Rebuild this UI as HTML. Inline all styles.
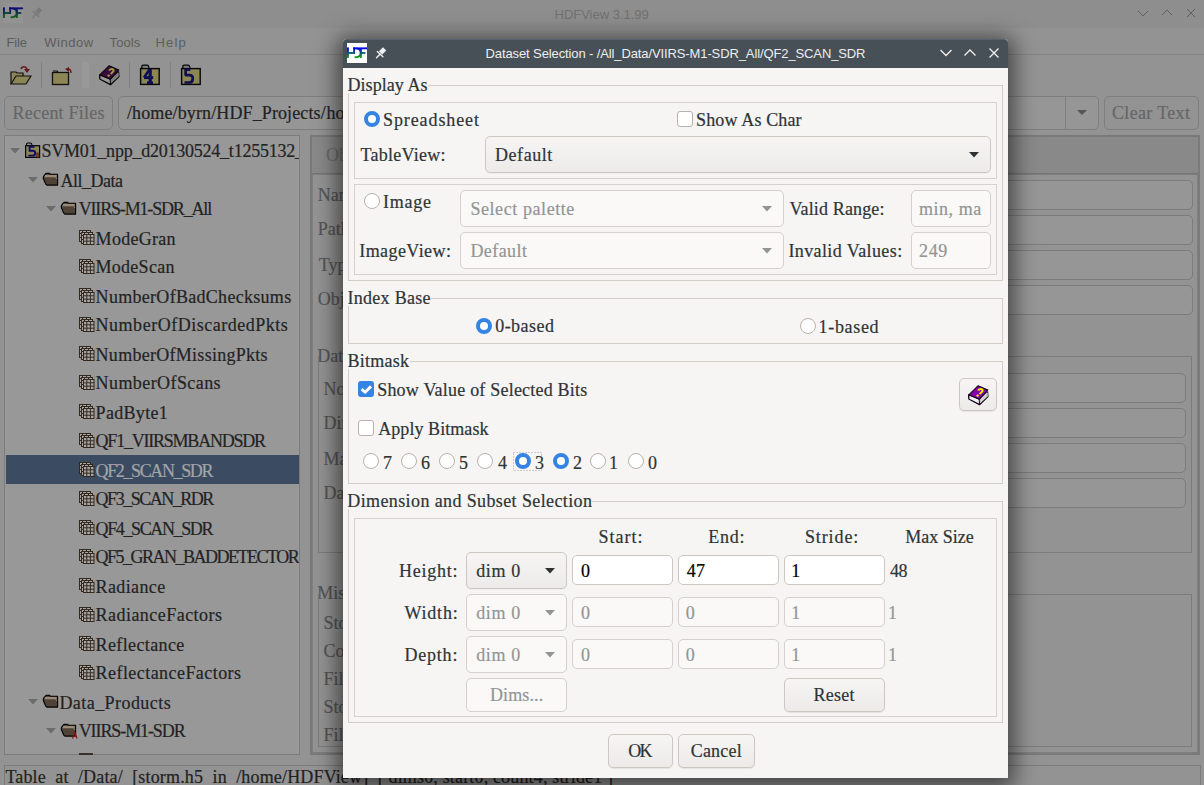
<!DOCTYPE html>
<html><head><meta charset="utf-8"><title>HDFView</title>
<style>
html,body{margin:0;padding:0;width:1204px;height:785px;overflow:hidden;background:#939393;position:relative}
body>div,body>svg{position:absolute;box-sizing:border-box}
.t{white-space:pre;position:absolute}
.s{-webkit-text-stroke:0.2px currentColor}
svg{position:absolute}
</style></head><body>
<div style="left:0px;top:0px;width:1204px;height:28px;background:#8e8e8e"></div>
<div style="left:0px;top:28px;width:1204px;height:27px;background:#939393"></div>
<div style="left:0px;top:54px;width:1204px;height:1px;background:#848484"></div>
<svg style="left:3px;top:3px" width="20" height="20" viewBox="0 0 20 20"><defs><linearGradient id="gm" x1="0" y1="4" x2="0" y2="15.5" gradientUnits="userSpaceOnUse"><stop offset="0.1" stop-color="#0c0c70"/><stop offset="0.9" stop-color="#156015"/></linearGradient></defs><rect width="20" height="20" fill="#939393"/>
<g fill="url(#gm)"><rect x="0" y="4.4" width="1.9" height="10.6"/><rect x="6.2" y="4.4" width="13.8" height="1.9"/><rect x="0" y="9.1" width="8" height="1.8"/><rect x="6.2" y="4.4" width="1.9" height="6.5"/><rect x="12.9" y="5" width="1.9" height="10"/><rect x="12.9" y="9.1" width="5.5" height="1.8"/></g>
<path d="M9 5.4C12.5 5.6 13.8 8 13.8 10C13.8 12.8 11.5 14.3 7.6 14.3" stroke="url(#gm)" stroke-width="1.9" fill="none"/></svg>
<svg style="left:28px;top:3px" width="20" height="20" viewBox="0 0 20 20"><g stroke="#7a7a7a" stroke-linecap="round"><path d="M8.6 9.9L12.6 5.9" stroke-width="4.6" stroke-linecap="butt"/><path d="M5.3 8.4L10.9 13.8" stroke-width="1.4"/><path d="M4.5 14.8L8.2 11.1" stroke-width="1.4"/></g></svg>
<div class="t" style="left:554.50px;top:7.00px;font-family:'Liberation Sans', sans-serif;font-size:13px;line-height:16px;color:#717171;letter-spacing:-0.008px;">HDFView 3.1.99</div>
<svg style="left:1130px;top:4px" width="74" height="20" viewBox="0 0 74 20"><g stroke="#606060" stroke-width="1" fill="none"><path d="M8 7l5 5 5-5"/><path d="M32 11l5-5 5 5"/><path d="M57 5l8 8M65 5l-8 8"/></g></svg>
<div class="t" style="left:6.60px;top:35.00px;font-family:'Liberation Sans', sans-serif;font-size:13px;line-height:16px;color:#5d5d5d;letter-spacing:-0.200px;">File</div>
<div class="t" style="left:44.30px;top:35.00px;font-family:'Liberation Sans', sans-serif;font-size:13px;line-height:16px;color:#5d5d5d;letter-spacing:0.540px;">Window</div>
<div class="t" style="left:109.50px;top:35.00px;font-family:'Liberation Sans', sans-serif;font-size:13px;line-height:16px;color:#5d5d5d;letter-spacing:0.125px;">Tools</div>
<div class="t" style="left:155.50px;top:35.00px;font-family:'Liberation Sans', sans-serif;font-size:13px;line-height:16px;color:#5d5d5d;letter-spacing:1.167px;">Help</div>
<div style="left:41px;top:62px;width:1px;height:26px;background:#808080"></div>
<div style="left:82px;top:62px;width:7px;height:26px;background:#989898"></div>
<div style="left:129px;top:62px;width:1px;height:26px;background:#808080"></div>
<div style="left:170px;top:62px;width:1px;height:26px;background:#808080"></div>
<svg style="left:10px;top:65px" width="22" height="20" viewBox="0 0 22 20">
<path d="M1 19V7h5l1 1h6v3" fill="#8c8656" stroke="#111" stroke-width="1.2"/>
<path d="M1 19l5-8h15l-5 8z" fill="#8c8656" stroke="#111" stroke-width="1.2"/>
<path d="M11 4c1-3 5-3 6 0" stroke="#6a1818" stroke-width="1.6" fill="none"/><path d="M14 4h6l-3 4z" fill="#6a1818"/></svg>
<svg style="left:51px;top:66px" width="22" height="20" viewBox="0 0 22 20">
<path d="M2 5h4l1 1" fill="#888" stroke="#111" stroke-width="1.2"/>
<rect x="1.5" y="6.5" width="16" height="12" fill="#8c8656" stroke="#111" stroke-width="1.3"/>
<path d="M20 7c0-2-1-4-3-4" stroke="#6a1818" stroke-width="1.5" fill="none"/><path d="M14 3l4-2v5z" fill="#6a1818"/></svg>
<svg style="left:99px;top:65px" width="22" height="22" viewBox="0 0 22 22">
<path d="M0.5 9.5L0.8 14L11.5 19.8L20 11.5L19.6 6.5" fill="#3a0c3e" stroke="#000" stroke-width="1.1" stroke-linejoin="round"/>
<path d="M1.5 10L11.3 14.8L19.3 7.5L19.6 11.2L11.5 18.7L1.5 13.8z" fill="#9a9a9a"/>
<path d="M11.3 14.8L19.3 7.5L19.6 11.2L11.5 18.7z" fill="#7e7e7e"/>
<path d="M0.8 10L10 0.8L19.8 5L11.2 14.3z" fill="#3a0c3e" stroke="#000" stroke-width="1.1" stroke-linejoin="round"/>
<path d="M11.2 14.3L11.5 19.5" stroke="#000" stroke-width="1"/>
<path d="M1.5 9l8-8" stroke="#5a3a5a" stroke-width="0.8" stroke-dasharray="0.8 0.8"/>
<path d="M10.3 5.6C10.6 3.6 14.8 3.4 14.6 5.6C14.4 7.2 12.4 7.2 12 9.2" stroke="#9c9a44" stroke-width="2" fill="none"/>
<circle cx="9.6" cy="10.6" r="1.2" fill="#9c9a44"/>
</svg>
<svg style="left:136px;top:60px" width="28" height="28" viewBox="0 0 28 28">
<path d="M5.8 8.5V6.5C5.8 5.6 6.4 5.2 7.3 5.2H11C11.8 5.2 12.6 5.8 12.8 7L13 8.5" fill="#7d7d7d" stroke="#050505" stroke-width="1.3"/>
<rect x="4.6" y="8.6" width="18.6" height="15.8" fill="#8c8655" stroke="#050505" stroke-width="1.4"/>
<path d="M14.2 8.5V24" stroke="#0e0e52" stroke-width="3.2"/><path d="M8 17.6L13.5 9.5" stroke="#0e0e52" stroke-width="2.6"/><path d="M8 17.6H17.2" stroke="#0e0e52" stroke-width="3"/><path d="M11 22.7H17" stroke="#0e0e52" stroke-width="2.6"/></svg>
<svg style="left:177px;top:60px" width="28" height="28" viewBox="0 0 28 28">
<path d="M5.8 8.5V6.5C5.8 5.6 6.4 5.2 7.3 5.2H11C11.8 5.2 12.6 5.8 12.8 7L13 8.5" fill="#7d7d7d" stroke="#050505" stroke-width="1.3"/>
<rect x="4.6" y="8.6" width="18.6" height="15.8" fill="#8c8655" stroke="#050505" stroke-width="1.4"/>
<path d="M13.3 9.6H8.6V15.2H12.6C15 15.2 15.8 16.6 15.8 18.6C15.8 21 14.6 22.5 12.3 22.5H7.5" stroke="#0e0e52" stroke-width="2.7" fill="none" stroke-linejoin="bevel"/></svg>
<div style="left:4px;top:96px;width:109px;height:34px;border:1px solid #7e7e7e;border-radius:5px;background:#939393"></div>
<div class="t s" style="left:12.50px;top:102.00px;font-family:'Liberation Serif', serif;font-size:18px;line-height:22px;color:#666666;letter-spacing:0.227px;">Recent Files</div>
<div style="left:118px;top:96px;width:981px;height:34px;border:1px solid #7e7e7e;border-radius:5px;background:#969696"></div>
<div style="left:1065px;top:97px;width:1px;height:32px;background:#7e7e7e"></div>
<svg style="left:1076px;top:109px" width="12" height="8" viewBox="0 0 12 8"><path d="M1 1h10l-5 5z" fill="#555"/></svg>
<div class="t s" style="left:127.00px;top:102.00px;font-family:'Liberation Serif', serif;font-size:18px;line-height:22px;color:#222222;letter-spacing:0.117px;">/home/byrn/HDF_Projects/</div>
<div class="t s" style="left:326.50px;top:102.00px;font-family:'Liberation Serif', serif;font-size:18px;line-height:22px;color:#222222;">home</div>
<div style="left:1104px;top:96px;width:95px;height:34px;border:1px solid #7e7e7e;border-radius:5px;background:#939393"></div>
<div class="t s" style="left:1112.00px;top:102.00px;font-family:'Liberation Serif', serif;font-size:18px;line-height:22px;color:#666666;letter-spacing:0.333px;">Clear Text</div>
<div style="left:4px;top:135px;width:296px;height:620px;border:1px solid #7c7c7c;background:#989898"></div>
<div style="left:6px;top:455px;width:293px;height:29px;background:#3b4c62"></div>
<div style="left:6px;top:136px;width:293px;height:618px;overflow:hidden">
<svg style="left:4px;top:12px" width="10" height="6" viewBox="0 0 10 6"><path d="M0 0h10l-5 5.5z" fill="#6c6c6c"/></svg>
<svg style="left:15.899999999999999px;top:3.8000000000000114px" width="22" height="22" viewBox="0 0 22 22"><path d="M4.5 5.5V4.2C4.5 3.4 5 3 5.8 3H8.5C9.3 3 9.8 3.5 9.8 4.2V5.5" fill="#8a8a8a" stroke="#050505" stroke-width="1.1"/><rect x="3.6" y="5.7" width="14" height="11.7" fill="#8c8655" stroke="#050505" stroke-width="1.2"/><path d="M12.5 6.8H7.6V10.8H10.8C12.6 10.8 13.2 12 13.2 13.2C13.2 14.8 12.3 15.6 10.8 15.6H6.3" stroke="#0e0e60" stroke-width="1.9" fill="none"/><path d="M14.6 13H16.3C17 13 17 14.9 16.3 14.9H14.9M14.9 12.8V17.3H16.4C17.2 17.3 17.2 15 16.4 15" stroke="#6a1212" stroke-width="0.9" fill="none"/></svg>
<div class="t s" style="left:35.50px;top:4.00px;font-family:'Liberation Serif', serif;font-size:18px;line-height:22px;color:#232323;letter-spacing:-0.232px;">SVM01_npp_d20130524_t1255132_</div>
<svg style="left:22px;top:41px" width="10" height="6" viewBox="0 0 10 6"><path d="M0 0h10l-5 5.5z" fill="#6c6c6c"/></svg>
<svg style="left:34.0px;top:32px" width="22" height="22" viewBox="0 0 22 22"><path d="M6 5.4H9.6L10.4 6.2H17.6V17.1H6.8L5.8 16.2L3.2 10.2C3.1 9 3.6 8 4.6 7Z" fill="#4f4236" stroke="#000" stroke-width="1.1" stroke-linejoin="round"/><path d="M5.2 6.9H16.7V9.2H4.4Z" fill="#9a8b79"/><path d="M15.6 9.2L17 11" stroke="#9a8b79" stroke-width="1"/></svg>
<div class="t s" style="left:54.40px;top:34.00px;font-family:'Liberation Serif', serif;font-size:18px;line-height:22px;color:#232323;letter-spacing:-0.471px;">All_Data</div>
<svg style="left:40px;top:70px" width="10" height="6" viewBox="0 0 10 6"><path d="M0 0h10l-5 5.5z" fill="#6c6c6c"/></svg>
<svg style="left:52.300000000000004px;top:61px" width="22" height="22" viewBox="0 0 22 22"><path d="M6 5.4H9.6L10.4 6.2H17.6V17.1H6.8L5.8 16.2L3.2 10.2C3.1 9 3.6 8 4.6 7Z" fill="#4f4236" stroke="#000" stroke-width="1.1" stroke-linejoin="round"/><path d="M5.2 6.9H16.7V9.2H4.4Z" fill="#9a8b79"/><path d="M15.6 9.2L17 11" stroke="#9a8b79" stroke-width="1"/></svg>
<div class="t s" style="left:72.70px;top:62.00px;font-family:'Liberation Serif', serif;font-size:18px;line-height:22px;color:#232323;letter-spacing:-1.167px;">VIIRS-M1-SDR_All</div>
<svg style="left:70.0px;top:90px" width="22" height="22" viewBox="0 0 22 22"><g stroke="#35291d" stroke-width="1" fill="#a6a6a6">
<rect x="3.5" y="4.5" width="11" height="11"/><path d="M3.5 7.5h11M3.5 11.5h11M6.5 4.5v11M10.5 4.5v11" fill="none"/>
<rect x="5.5" y="6.5" width="11" height="11"/><path d="M5.5 9.5h11M5.5 13.5h11M8.5 6.5v11M12.5 6.5v11" fill="none"/>
<rect x="7.5" y="8.5" width="10.5" height="10"/><path d="M7.5 11.8h10.5M7.5 15.2h10.5M10.8 8.5v10M14.4 8.5v10" fill="none"/></g></svg>
<div class="t s" style="left:89.60px;top:92.00px;font-family:'Liberation Serif', serif;font-size:18px;line-height:22px;color:#232323;letter-spacing:0.286px;">ModeGran</div>
<svg style="left:70.0px;top:119px" width="22" height="22" viewBox="0 0 22 22"><g stroke="#35291d" stroke-width="1" fill="#a6a6a6">
<rect x="3.5" y="4.5" width="11" height="11"/><path d="M3.5 7.5h11M3.5 11.5h11M6.5 4.5v11M10.5 4.5v11" fill="none"/>
<rect x="5.5" y="6.5" width="11" height="11"/><path d="M5.5 9.5h11M5.5 13.5h11M8.5 6.5v11M12.5 6.5v11" fill="none"/>
<rect x="7.5" y="8.5" width="10.5" height="10"/><path d="M7.5 11.8h10.5M7.5 15.2h10.5M10.8 8.5v10M14.4 8.5v10" fill="none"/></g></svg>
<div class="t s" style="left:89.60px;top:120.00px;font-family:'Liberation Serif', serif;font-size:18px;line-height:22px;color:#232323;letter-spacing:0.257px;">ModeScan</div>
<svg style="left:70.0px;top:148px" width="22" height="22" viewBox="0 0 22 22"><g stroke="#35291d" stroke-width="1" fill="#a6a6a6">
<rect x="3.5" y="4.5" width="11" height="11"/><path d="M3.5 7.5h11M3.5 11.5h11M6.5 4.5v11M10.5 4.5v11" fill="none"/>
<rect x="5.5" y="6.5" width="11" height="11"/><path d="M5.5 9.5h11M5.5 13.5h11M8.5 6.5v11M12.5 6.5v11" fill="none"/>
<rect x="7.5" y="8.5" width="10.5" height="10"/><path d="M7.5 11.8h10.5M7.5 15.2h10.5M10.8 8.5v10M14.4 8.5v10" fill="none"/></g></svg>
<div class="t s" style="left:89.60px;top:150.00px;font-family:'Liberation Serif', serif;font-size:18px;line-height:22px;color:#232323;letter-spacing:0.295px;">NumberOfBadChecksums</div>
<svg style="left:70.0px;top:177px" width="22" height="22" viewBox="0 0 22 22"><g stroke="#35291d" stroke-width="1" fill="#a6a6a6">
<rect x="3.5" y="4.5" width="11" height="11"/><path d="M3.5 7.5h11M3.5 11.5h11M6.5 4.5v11M10.5 4.5v11" fill="none"/>
<rect x="5.5" y="6.5" width="11" height="11"/><path d="M5.5 9.5h11M5.5 13.5h11M8.5 6.5v11M12.5 6.5v11" fill="none"/>
<rect x="7.5" y="8.5" width="10.5" height="10"/><path d="M7.5 11.8h10.5M7.5 15.2h10.5M10.8 8.5v10M14.4 8.5v10" fill="none"/></g></svg>
<div class="t s" style="left:89.60px;top:178.00px;font-family:'Liberation Serif', serif;font-size:18px;line-height:22px;color:#232323;letter-spacing:0.510px;">NumberOfDiscardedPkts</div>
<svg style="left:70.0px;top:206px" width="22" height="22" viewBox="0 0 22 22"><g stroke="#35291d" stroke-width="1" fill="#a6a6a6">
<rect x="3.5" y="4.5" width="11" height="11"/><path d="M3.5 7.5h11M3.5 11.5h11M6.5 4.5v11M10.5 4.5v11" fill="none"/>
<rect x="5.5" y="6.5" width="11" height="11"/><path d="M5.5 9.5h11M5.5 13.5h11M8.5 6.5v11M12.5 6.5v11" fill="none"/>
<rect x="7.5" y="8.5" width="10.5" height="10"/><path d="M7.5 11.8h10.5M7.5 15.2h10.5M10.8 8.5v10M14.4 8.5v10" fill="none"/></g></svg>
<div class="t s" style="left:89.60px;top:208.00px;font-family:'Liberation Serif', serif;font-size:18px;line-height:22px;color:#232323;letter-spacing:0.278px;">NumberOfMissingPkts</div>
<svg style="left:70.0px;top:235px" width="22" height="22" viewBox="0 0 22 22"><g stroke="#35291d" stroke-width="1" fill="#a6a6a6">
<rect x="3.5" y="4.5" width="11" height="11"/><path d="M3.5 7.5h11M3.5 11.5h11M6.5 4.5v11M10.5 4.5v11" fill="none"/>
<rect x="5.5" y="6.5" width="11" height="11"/><path d="M5.5 9.5h11M5.5 13.5h11M8.5 6.5v11M12.5 6.5v11" fill="none"/>
<rect x="7.5" y="8.5" width="10.5" height="10"/><path d="M7.5 11.8h10.5M7.5 15.2h10.5M10.8 8.5v10M14.4 8.5v10" fill="none"/></g></svg>
<div class="t s" style="left:89.60px;top:236.00px;font-family:'Liberation Serif', serif;font-size:18px;line-height:22px;color:#232323;letter-spacing:0.417px;">NumberOfScans</div>
<svg style="left:70.0px;top:264px" width="22" height="22" viewBox="0 0 22 22"><g stroke="#35291d" stroke-width="1" fill="#a6a6a6">
<rect x="3.5" y="4.5" width="11" height="11"/><path d="M3.5 7.5h11M3.5 11.5h11M6.5 4.5v11M10.5 4.5v11" fill="none"/>
<rect x="5.5" y="6.5" width="11" height="11"/><path d="M5.5 9.5h11M5.5 13.5h11M8.5 6.5v11M12.5 6.5v11" fill="none"/>
<rect x="7.5" y="8.5" width="10.5" height="10"/><path d="M7.5 11.8h10.5M7.5 15.2h10.5M10.8 8.5v10M14.4 8.5v10" fill="none"/></g></svg>
<div class="t s" style="left:89.60px;top:266.00px;font-family:'Liberation Serif', serif;font-size:18px;line-height:22px;color:#232323;letter-spacing:0.314px;">PadByte1</div>
<svg style="left:70.0px;top:293px" width="22" height="22" viewBox="0 0 22 22"><g stroke="#35291d" stroke-width="1" fill="#a6a6a6">
<rect x="3.5" y="4.5" width="11" height="11"/><path d="M3.5 7.5h11M3.5 11.5h11M6.5 4.5v11M10.5 4.5v11" fill="none"/>
<rect x="5.5" y="6.5" width="11" height="11"/><path d="M5.5 9.5h11M5.5 13.5h11M8.5 6.5v11M12.5 6.5v11" fill="none"/>
<rect x="7.5" y="8.5" width="10.5" height="10"/><path d="M7.5 11.8h10.5M7.5 15.2h10.5M10.8 8.5v10M14.4 8.5v10" fill="none"/></g></svg>
<div class="t s" style="left:89.60px;top:294.00px;font-family:'Liberation Serif', serif;font-size:18px;line-height:22px;color:#232323;letter-spacing:-1.225px;">QF1_VIIRSMBANDSDR</div>
<svg style="left:70.0px;top:322px" width="22" height="22" viewBox="0 0 22 22"><g stroke="#35291d" stroke-width="1" fill="#a6a6a6">
<rect x="3.5" y="4.5" width="11" height="11"/><path d="M3.5 7.5h11M3.5 11.5h11M6.5 4.5v11M10.5 4.5v11" fill="none"/>
<rect x="5.5" y="6.5" width="11" height="11"/><path d="M5.5 9.5h11M5.5 13.5h11M8.5 6.5v11M12.5 6.5v11" fill="none"/>
<rect x="7.5" y="8.5" width="10.5" height="10"/><path d="M7.5 11.8h10.5M7.5 15.2h10.5M10.8 8.5v10M14.4 8.5v10" fill="none"/></g></svg>
<div class="t s" style="left:89.60px;top:324.00px;font-family:'Liberation Serif', serif;font-size:18px;line-height:22px;color:#a2a5a8;letter-spacing:-1.382px;">QF2_SCAN_SDR</div>
<svg style="left:70.0px;top:351px" width="22" height="22" viewBox="0 0 22 22"><g stroke="#35291d" stroke-width="1" fill="#a6a6a6">
<rect x="3.5" y="4.5" width="11" height="11"/><path d="M3.5 7.5h11M3.5 11.5h11M6.5 4.5v11M10.5 4.5v11" fill="none"/>
<rect x="5.5" y="6.5" width="11" height="11"/><path d="M5.5 9.5h11M5.5 13.5h11M8.5 6.5v11M12.5 6.5v11" fill="none"/>
<rect x="7.5" y="8.5" width="10.5" height="10"/><path d="M7.5 11.8h10.5M7.5 15.2h10.5M10.8 8.5v10M14.4 8.5v10" fill="none"/></g></svg>
<div class="t s" style="left:89.60px;top:352.00px;font-family:'Liberation Serif', serif;font-size:18px;line-height:22px;color:#232323;letter-spacing:-1.482px;">QF3_SCAN_RDR</div>
<svg style="left:70.0px;top:380px" width="22" height="22" viewBox="0 0 22 22"><g stroke="#35291d" stroke-width="1" fill="#a6a6a6">
<rect x="3.5" y="4.5" width="11" height="11"/><path d="M3.5 7.5h11M3.5 11.5h11M6.5 4.5v11M10.5 4.5v11" fill="none"/>
<rect x="5.5" y="6.5" width="11" height="11"/><path d="M5.5 9.5h11M5.5 13.5h11M8.5 6.5v11M12.5 6.5v11" fill="none"/>
<rect x="7.5" y="8.5" width="10.5" height="10"/><path d="M7.5 11.8h10.5M7.5 15.2h10.5M10.8 8.5v10M14.4 8.5v10" fill="none"/></g></svg>
<div class="t s" style="left:89.60px;top:382.00px;font-family:'Liberation Serif', serif;font-size:18px;line-height:22px;color:#232323;letter-spacing:-1.382px;">QF4_SCAN_SDR</div>
<svg style="left:70.0px;top:409px" width="22" height="22" viewBox="0 0 22 22"><g stroke="#35291d" stroke-width="1" fill="#a6a6a6">
<rect x="3.5" y="4.5" width="11" height="11"/><path d="M3.5 7.5h11M3.5 11.5h11M6.5 4.5v11M10.5 4.5v11" fill="none"/>
<rect x="5.5" y="6.5" width="11" height="11"/><path d="M5.5 9.5h11M5.5 13.5h11M8.5 6.5v11M12.5 6.5v11" fill="none"/>
<rect x="7.5" y="8.5" width="10.5" height="10"/><path d="M7.5 11.8h10.5M7.5 15.2h10.5M10.8 8.5v10M14.4 8.5v10" fill="none"/></g></svg>
<div class="t s" style="left:89.60px;top:410.00px;font-family:'Liberation Serif', serif;font-size:18px;line-height:22px;color:#232323;letter-spacing:-1.505px;">QF5_GRAN_BADDETECTOR</div>
<svg style="left:70.0px;top:438px" width="22" height="22" viewBox="0 0 22 22"><g stroke="#35291d" stroke-width="1" fill="#a6a6a6">
<rect x="3.5" y="4.5" width="11" height="11"/><path d="M3.5 7.5h11M3.5 11.5h11M6.5 4.5v11M10.5 4.5v11" fill="none"/>
<rect x="5.5" y="6.5" width="11" height="11"/><path d="M5.5 9.5h11M5.5 13.5h11M8.5 6.5v11M12.5 6.5v11" fill="none"/>
<rect x="7.5" y="8.5" width="10.5" height="10"/><path d="M7.5 11.8h10.5M7.5 15.2h10.5M10.8 8.5v10M14.4 8.5v10" fill="none"/></g></svg>
<div class="t s" style="left:89.60px;top:440.00px;font-family:'Liberation Serif', serif;font-size:18px;line-height:22px;color:#232323;letter-spacing:0.371px;">Radiance</div>
<svg style="left:70.0px;top:467px" width="22" height="22" viewBox="0 0 22 22"><g stroke="#35291d" stroke-width="1" fill="#a6a6a6">
<rect x="3.5" y="4.5" width="11" height="11"/><path d="M3.5 7.5h11M3.5 11.5h11M6.5 4.5v11M10.5 4.5v11" fill="none"/>
<rect x="5.5" y="6.5" width="11" height="11"/><path d="M5.5 9.5h11M5.5 13.5h11M8.5 6.5v11M12.5 6.5v11" fill="none"/>
<rect x="7.5" y="8.5" width="10.5" height="10"/><path d="M7.5 11.8h10.5M7.5 15.2h10.5M10.8 8.5v10M14.4 8.5v10" fill="none"/></g></svg>
<div class="t s" style="left:89.60px;top:468.00px;font-family:'Liberation Serif', serif;font-size:18px;line-height:22px;color:#232323;letter-spacing:0.457px;">RadianceFactors</div>
<svg style="left:70.0px;top:496px" width="22" height="22" viewBox="0 0 22 22"><g stroke="#35291d" stroke-width="1" fill="#a6a6a6">
<rect x="3.5" y="4.5" width="11" height="11"/><path d="M3.5 7.5h11M3.5 11.5h11M6.5 4.5v11M10.5 4.5v11" fill="none"/>
<rect x="5.5" y="6.5" width="11" height="11"/><path d="M5.5 9.5h11M5.5 13.5h11M8.5 6.5v11M12.5 6.5v11" fill="none"/>
<rect x="7.5" y="8.5" width="10.5" height="10"/><path d="M7.5 11.8h10.5M7.5 15.2h10.5M10.8 8.5v10M14.4 8.5v10" fill="none"/></g></svg>
<div class="t s" style="left:89.60px;top:498.00px;font-family:'Liberation Serif', serif;font-size:18px;line-height:22px;color:#232323;letter-spacing:0.380px;">Reflectance</div>
<svg style="left:70.0px;top:525px" width="22" height="22" viewBox="0 0 22 22"><g stroke="#35291d" stroke-width="1" fill="#a6a6a6">
<rect x="3.5" y="4.5" width="11" height="11"/><path d="M3.5 7.5h11M3.5 11.5h11M6.5 4.5v11M10.5 4.5v11" fill="none"/>
<rect x="5.5" y="6.5" width="11" height="11"/><path d="M5.5 9.5h11M5.5 13.5h11M8.5 6.5v11M12.5 6.5v11" fill="none"/>
<rect x="7.5" y="8.5" width="10.5" height="10"/><path d="M7.5 11.8h10.5M7.5 15.2h10.5M10.8 8.5v10M14.4 8.5v10" fill="none"/></g></svg>
<div class="t s" style="left:89.60px;top:526.00px;font-family:'Liberation Serif', serif;font-size:18px;line-height:22px;color:#232323;letter-spacing:0.441px;">ReflectanceFactors</div>
<svg style="left:22px;top:563px" width="10" height="6" viewBox="0 0 10 6"><path d="M0 0h10l-5 5.5z" fill="#6c6c6c"/></svg>
<svg style="left:34.0px;top:554px" width="22" height="22" viewBox="0 0 22 22"><path d="M6 5.4H9.6L10.4 6.2H17.6V17.1H6.8L5.8 16.2L3.2 10.2C3.1 9 3.6 8 4.6 7Z" fill="#4f4236" stroke="#000" stroke-width="1.1" stroke-linejoin="round"/><path d="M5.2 6.9H16.7V9.2H4.4Z" fill="#9a8b79"/><path d="M15.6 9.2L17 11" stroke="#9a8b79" stroke-width="1"/></svg>
<div class="t s" style="left:53.40px;top:556.00px;font-family:'Liberation Serif', serif;font-size:18px;line-height:22px;color:#232323;letter-spacing:0.442px;">Data_Products</div>
<svg style="left:40px;top:592px" width="10" height="6" viewBox="0 0 10 6"><path d="M0 0h10l-5 5.5z" fill="#6c6c6c"/></svg>
<svg style="left:52.300000000000004px;top:583px" width="22" height="22" viewBox="0 0 22 22"><path d="M6 5.4H9.6L10.4 6.2H17.6V17.1H6.8L5.8 16.2L3.2 10.2C3.1 9 3.6 8 4.6 7Z" fill="#4f4236" stroke="#000" stroke-width="1.1" stroke-linejoin="round"/><path d="M5.2 6.9H16.7V9.2H4.4Z" fill="#9a8b79"/><path d="M15.6 9.2L17 11" stroke="#9a8b79" stroke-width="1"/><path d="M14.5 19.5L16.8 13.5L19 19.5M15.3 17.5H18.2" stroke="#8a1414" stroke-width="1.2" fill="none"/></svg>
<div class="t s" style="left:72.70px;top:584.00px;font-family:'Liberation Serif', serif;font-size:18px;line-height:22px;color:#232323;letter-spacing:-1.091px;">VIIRS-M1-SDR</div>
</div>
<div style="left:79px;top:753px;width:14px;height:2px;background:#3b3027"></div>
<div style="left:310px;top:135px;width:890px;height:620px;border:2px solid #7a7a7a;background:#939393"></div>
<div style="left:312px;top:137px;width:886px;height:37px;background:#898989;border-bottom:1px solid #747474"></div>
<div class="t s" style="left:326.00px;top:144.00px;font-family:'Liberation Serif', serif;font-size:18px;line-height:22px;color:#6c6c6c;">Object</div>
<div style="left:312px;top:174px;width:886px;height:579px;border:1px solid #7f7f7f"></div>
<div class="t s" style="left:317.70px;top:184.00px;font-family:'Liberation Serif', serif;font-size:18px;line-height:22px;color:#555555;">Name</div>
<div style="left:420px;top:180px;width:773px;height:30px;border:1px solid #7c7c7c;border-radius:5px;background:#969696"></div>
<div class="t s" style="left:317.70px;top:218.00px;font-family:'Liberation Serif', serif;font-size:18px;line-height:22px;color:#555555;">Path</div>
<div style="left:420px;top:215px;width:773px;height:30px;border:1px solid #7c7c7c;border-radius:5px;background:#969696"></div>
<div class="t s" style="left:318.70px;top:254.00px;font-family:'Liberation Serif', serif;font-size:18px;line-height:22px;color:#555555;">Type</div>
<div style="left:420px;top:250px;width:773px;height:30px;border:1px solid #7c7c7c;border-radius:5px;background:#969696"></div>
<div class="t s" style="left:317.70px;top:288.00px;font-family:'Liberation Serif', serif;font-size:18px;line-height:22px;color:#555555;">Object Ref</div>
<div style="left:420px;top:285px;width:773px;height:30px;border:1px solid #7c7c7c;border-radius:5px;background:#969696"></div>
<div class="t s" style="left:317.20px;top:345.00px;font-family:'Liberation Serif', serif;font-size:18px;line-height:22px;color:#555555;">Dataspace and Datatype</div>
<div style="left:318px;top:356px;width:874px;height:197px;border:1px solid #7c7c7c;border-top:none"></div>
<div style="left:400px;top:356px;width:792px;height:1px;background:#7c7c7c"></div>
<div class="t s" style="left:323.60px;top:378.00px;font-family:'Liberation Serif', serif;font-size:18px;line-height:22px;color:#555555;">No. of Dimension(s)</div>
<div style="left:500px;top:373px;width:686px;height:30px;border:1px solid #7c7c7c;border-radius:5px;background:#969696"></div>
<div class="t s" style="left:323.60px;top:412.00px;font-family:'Liberation Serif', serif;font-size:18px;line-height:22px;color:#555555;">Dimension Size(s)</div>
<div style="left:500px;top:408px;width:686px;height:30px;border:1px solid #7c7c7c;border-radius:5px;background:#969696"></div>
<div class="t s" style="left:323.60px;top:448.00px;font-family:'Liberation Serif', serif;font-size:18px;line-height:22px;color:#555555;">Max Dimension Size(s)</div>
<div style="left:500px;top:443px;width:686px;height:30px;border:1px solid #7c7c7c;border-radius:5px;background:#969696"></div>
<div class="t s" style="left:323.60px;top:482.00px;font-family:'Liberation Serif', serif;font-size:18px;line-height:22px;color:#555555;">Data Type</div>
<div style="left:500px;top:478px;width:686px;height:30px;border:1px solid #7c7c7c;border-radius:5px;background:#969696"></div>
<div class="t s" style="left:317.20px;top:582.00px;font-family:'Liberation Serif', serif;font-size:18px;line-height:22px;color:#555555;">Miscellaneous Dataset Information</div>
<div style="left:318px;top:594px;width:874px;height:153px;border:1px solid #7c7c7c;border-top:none"></div>
<div style="left:440px;top:594px;width:752px;height:1px;background:#7c7c7c"></div>
<div class="t s" style="left:323.60px;top:612.00px;font-family:'Liberation Serif', serif;font-size:18px;line-height:22px;color:#555555;">Storage Layout</div>
<div class="t s" style="left:323.60px;top:640.00px;font-family:'Liberation Serif', serif;font-size:18px;line-height:22px;color:#555555;">Compression</div>
<div class="t s" style="left:323.60px;top:668.00px;font-family:'Liberation Serif', serif;font-size:18px;line-height:22px;color:#555555;">Filters</div>
<div class="t s" style="left:323.60px;top:696.00px;font-family:'Liberation Serif', serif;font-size:18px;line-height:22px;color:#555555;">Storage</div>
<div class="t s" style="left:323.60px;top:724.00px;font-family:'Liberation Serif', serif;font-size:18px;line-height:22px;color:#555555;">Fill value</div>
<div style="left:4px;top:765px;width:1197px;height:30px;border:1px solid #7c7c7c;background:#939393"></div>
<div class="t s" style="left:5.40px;top:766.00px;font-family:'Liberation Serif', serif;font-size:18px;line-height:22px;color:#222222;letter-spacing:0.164px;">Table  at  /Data/  [storm.h5  in  /home/HDFView]  [ dims0, start0, count4, stride1 ]</div>
<div style="left:343px;top:39px;width:665px;height:739px;border-radius:4px 4px 0 0;box-shadow:0 4px 22px 6px rgba(0,0,0,0.55)"></div>
<div style="left:343px;top:39px;width:665px;height:739px;background:#f6f5f4;border-radius:4px 4px 0 0"></div>
<div style="left:343px;top:39px;width:665px;height:29px;background:#475057;border-radius:4px 4px 0 0;border-top:1px solid #56636e"></div>
<svg style="left:347px;top:43px" width="20" height="20" viewBox="0 0 20 20"><defs><linearGradient id="gd" x1="0" y1="4" x2="0" y2="15.5" gradientUnits="userSpaceOnUse"><stop offset="0.1" stop-color="#0000f0"/><stop offset="0.9" stop-color="#10a010"/></linearGradient></defs><rect width="20" height="20" fill="#ffffff"/>
<g fill="url(#gd)"><rect x="0" y="4.4" width="1.9" height="10.6"/><rect x="6.2" y="4.4" width="13.8" height="1.9"/><rect x="0" y="9.1" width="8" height="1.8"/><rect x="6.2" y="4.4" width="1.9" height="6.5"/><rect x="12.9" y="5" width="1.9" height="10"/><rect x="12.9" y="9.1" width="5.5" height="1.8"/></g>
<path d="M9 5.4C12.5 5.6 13.8 8 13.8 10C13.8 12.8 11.5 14.3 7.6 14.3" stroke="url(#gd)" stroke-width="1.9" fill="none"/></svg>
<svg style="left:372px;top:43px" width="20" height="20" viewBox="0 0 20 20"><g stroke="#f0f0f0" stroke-linecap="round"><path d="M8.6 9.9L12.6 5.9" stroke-width="4.6" stroke-linecap="butt"/><path d="M5.3 8.4L10.9 13.8" stroke-width="1.4"/><path d="M4.5 14.8L8.2 11.1" stroke-width="1.4"/></g></svg>
<div class="t" style="left:485.60px;top:46.00px;font-family:'Liberation Sans', sans-serif;font-size:13px;line-height:16px;color:#eceeef;letter-spacing:-0.114px;">Dataset Selection - /All_Data/VIIRS-M1-SDR_All/QF2_SCAN_SDR</div>
<svg style="left:936px;top:44px" width="68" height="18" viewBox="0 0 68 18"><g stroke="#f0f0f0" stroke-width="1.3" fill="none"><path d="M4.5 6l5.5 5.5 5.5-5.5"/><path d="M28.5 11.5l5.5-5.5 5.5 5.5"/><path d="M53.5 4.5l9 9M62.5 4.5l-9 9"/></g></svg>
<div class="t s" style="left:347.50px;top:74.00px;font-family:'Liberation Serif', serif;font-size:18px;line-height:22px;color:#2e3436;letter-spacing:0.056px;">Display As</div>
<div style="left:348px;top:93px;width:655px;height:188px;border:1px solid #d0ccc6;border-top:none"></div>
<div style="left:1002px;top:85px;width:1px;height:8px;background:#d0ccc6"></div>
<div style="left:428px;top:85px;width:575px;height:1px;background:#d0ccc6"></div>
<div style="left:354px;top:102px;width:643px;height:77px;border:1px solid #d6d1cc"></div>
<div style="left:364px;top:111px;width:16px;height:16px;border-radius:50%;border:4.5px solid #3584e4;background:#fff"></div>
<div class="t s" style="left:383.00px;top:109.00px;font-family:'Liberation Serif', serif;font-size:18px;line-height:22px;color:#2e3436;letter-spacing:0.900px;">Spreadsheet</div>
<div style="left:677px;top:111px;width:16px;height:16px;border-radius:3px;border:1px solid #b9b1aa;background:#fff"></div>
<div class="t s" style="left:696.00px;top:109.00px;font-family:'Liberation Serif', serif;font-size:18px;line-height:22px;color:#2e3436;letter-spacing:0.145px;">Show As Char</div>
<div class="t s" style="left:360.40px;top:144.00px;font-family:'Liberation Serif', serif;font-size:18px;line-height:22px;color:#2e3436;letter-spacing:0.289px;">TableView:</div>
<div style="left:485px;top:136px;width:506px;height:37px;border:1px solid #cdc7c2;border-radius:5px;background:linear-gradient(#f6f5f4,#edebe9);box-shadow:0 1px 0 rgba(0,0,0,0.04)"></div>
<svg style="left:969px;top:152.0px" width="10" height="6" viewBox="0 0 10 6"><path d="M0 0h10l-5 5.5z" fill="#2e3436"/></svg>
<div class="t s" style="left:495.00px;top:144.00px;font-family:'Liberation Serif', serif;font-size:18px;line-height:22px;color:#2e3436;letter-spacing:0.550px;">Default</div>
<div style="left:354px;top:184px;width:643px;height:91px;border:1px solid #d6d1cc"></div>
<div style="left:364px;top:193px;width:16px;height:16px;border-radius:50%;border:1px solid #b9b1aa;background:#fff"></div>
<div class="t s" style="left:383.00px;top:191.00px;font-family:'Liberation Serif', serif;font-size:18px;line-height:22px;color:#2e3436;letter-spacing:0.750px;">Image</div>
<div style="left:460px;top:190px;width:324px;height:37px;border:1px solid #d5d0cc;border-radius:5px;background:#faf9f8"></div>
<svg style="left:762px;top:206.0px" width="10" height="6" viewBox="0 0 10 6"><path d="M0 0h10l-5 5.5z" fill="#929595"/></svg>
<div class="t s" style="left:470.40px;top:198.00px;font-family:'Liberation Serif', serif;font-size:18px;line-height:22px;color:#929595;letter-spacing:0.577px;">Select palette</div>
<div class="t s" style="left:789.40px;top:198.00px;font-family:'Liberation Serif', serif;font-size:18px;line-height:22px;color:#2e3436;letter-spacing:0.145px;">Valid Range:</div>
<div style="left:911px;top:190px;width:80px;height:37px;border:1px solid #d5d0cc;border-radius:5px;background:#faf9f8"></div>
<div class="t s" style="left:919.00px;top:198.00px;font-family:'Liberation Serif', serif;font-size:18px;line-height:22px;color:#929595;letter-spacing:0.533px;">min, ma</div>
<div class="t s" style="left:359.30px;top:240.00px;font-family:'Liberation Serif', serif;font-size:18px;line-height:22px;color:#2e3436;letter-spacing:0.411px;">ImageView:</div>
<div style="left:460px;top:232px;width:324px;height:37px;border:1px solid #d5d0cc;border-radius:5px;background:#faf9f8"></div>
<svg style="left:762px;top:248.0px" width="10" height="6" viewBox="0 0 10 6"><path d="M0 0h10l-5 5.5z" fill="#929595"/></svg>
<div class="t s" style="left:470.40px;top:240.00px;font-family:'Liberation Serif', serif;font-size:18px;line-height:22px;color:#929595;letter-spacing:0.433px;">Default</div>
<div class="t s" style="left:788.40px;top:240.00px;font-family:'Liberation Serif', serif;font-size:18px;line-height:22px;color:#2e3436;letter-spacing:0.400px;">Invalid Values:</div>
<div style="left:911px;top:232px;width:80px;height:37px;border:1px solid #d5d0cc;border-radius:5px;background:#faf9f8"></div>
<div class="t s" style="left:919.00px;top:240.00px;font-family:'Liberation Serif', serif;font-size:18px;line-height:22px;color:#929595;letter-spacing:0.650px;">249</div>
<div class="t s" style="left:347.50px;top:287.00px;font-family:'Liberation Serif', serif;font-size:18px;line-height:22px;color:#2e3436;letter-spacing:0.278px;">Index Base</div>
<div style="left:348px;top:306px;width:655px;height:38px;border:1px solid #d0ccc6;border-top:none"></div>
<div style="left:1002px;top:298px;width:1px;height:8px;background:#d0ccc6"></div>
<div style="left:431px;top:298px;width:572px;height:1px;background:#d0ccc6"></div>
<div style="left:476px;top:318px;width:16px;height:16px;border-radius:50%;border:4.5px solid #3584e4;background:#fff"></div>
<div class="t s" style="left:495.20px;top:315.00px;font-family:'Liberation Serif', serif;font-size:18px;line-height:22px;color:#2e3436;letter-spacing:0.467px;">0-based</div>
<div style="left:800px;top:318px;width:16px;height:16px;border-radius:50%;border:1px solid #b9b1aa;background:#fff"></div>
<div class="t s" style="left:818.60px;top:316.00px;font-family:'Liberation Serif', serif;font-size:18px;line-height:22px;color:#2e3436;letter-spacing:0.667px;">1-based</div>
<div class="t s" style="left:347.50px;top:350.00px;font-family:'Liberation Serif', serif;font-size:18px;line-height:22px;color:#2e3436;letter-spacing:0.250px;">Bitmask</div>
<div style="left:348px;top:369px;width:655px;height:115px;border:1px solid #d0ccc6;border-top:none"></div>
<div style="left:1002px;top:361px;width:1px;height:8px;background:#d0ccc6"></div>
<div style="left:410px;top:361px;width:593px;height:1px;background:#d0ccc6"></div>
<svg style="left:358px;top:381px" width="16" height="16" viewBox="0 0 16 16"><rect x="0" y="0" width="16" height="16" rx="3" fill="#3584e4"/><path d="M3.6 8.1L7.1 11.3L13 5.4" stroke="#fff" stroke-width="2.9" fill="none" stroke-linejoin="round"/></svg>
<div class="t s" style="left:377.20px;top:379.00px;font-family:'Liberation Serif', serif;font-size:18px;line-height:22px;color:#2e3436;letter-spacing:0.208px;">Show Value of Selected Bits</div>
<div style="left:959px;top:378px;width:38px;height:33px;border:1px solid #cdc7c2;border-radius:5px;background:linear-gradient(#f6f5f4,#edebe9);box-shadow:0 1px 1px rgba(0,0,0,0.07)"></div>
<svg style="left:968px;top:385px" width="22" height="22" viewBox="0 0 22 22">
<path d="M0.5 9.5L0.8 14L11.5 19.8L20 11.5L19.6 6.5" fill="#8800aa" stroke="#000" stroke-width="1.1" stroke-linejoin="round"/>
<path d="M1.5 10L11.3 14.8L19.3 7.5L19.6 11.2L11.5 18.7L1.5 13.8z" fill="#f6f6f6"/>
<path d="M11.3 14.8L19.3 7.5L19.6 11.2L11.5 18.7z" fill="#cfcfcf"/>
<path d="M0.8 10L10 0.8L19.8 5L11.2 14.3z" fill="#8800aa" stroke="#000" stroke-width="1.1" stroke-linejoin="round"/>
<path d="M11.2 14.3L11.5 19.5" stroke="#000" stroke-width="1"/>
<path d="M1.5 9l8-8" stroke="#c060d0" stroke-width="0.8" stroke-dasharray="0.8 0.8"/>
<path d="M10.3 5.6C10.6 3.6 14.8 3.4 14.6 5.6C14.4 7.2 12.4 7.2 12 9.2" stroke="#f0f000" stroke-width="2" fill="none"/>
<circle cx="9.6" cy="10.6" r="1.2" fill="#f0f000"/>
</svg>
<div style="left:358px;top:420px;width:16px;height:16px;border-radius:3px;border:1px solid #b9b1aa;background:#fff"></div>
<div class="t s" style="left:378.20px;top:418.00px;font-family:'Liberation Serif', serif;font-size:18px;line-height:22px;color:#2e3436;letter-spacing:0.067px;">Apply Bitmask</div>
<div style="left:363px;top:453px;width:16px;height:16px;border-radius:50%;border:1px solid #b9b1aa;background:#fff"></div>
<div class="t s" style="left:383.00px;top:452.00px;font-family:'Liberation Serif', serif;font-size:18px;line-height:22px;color:#2e3436;">7</div>
<div style="left:401px;top:453px;width:16px;height:16px;border-radius:50%;border:1px solid #b9b1aa;background:#fff"></div>
<div class="t s" style="left:421.00px;top:452.00px;font-family:'Liberation Serif', serif;font-size:18px;line-height:22px;color:#2e3436;">6</div>
<div style="left:439px;top:453px;width:16px;height:16px;border-radius:50%;border:1px solid #b9b1aa;background:#fff"></div>
<div class="t s" style="left:459.00px;top:452.00px;font-family:'Liberation Serif', serif;font-size:18px;line-height:22px;color:#2e3436;">5</div>
<div style="left:477px;top:453px;width:16px;height:16px;border-radius:50%;border:1px solid #b9b1aa;background:#fff"></div>
<div class="t s" style="left:498.00px;top:452.00px;font-family:'Liberation Serif', serif;font-size:18px;line-height:22px;color:#2e3436;">4</div>
<div style="left:515px;top:453px;width:16px;height:16px;border-radius:50%;border:4.5px solid #3584e4;background:#fff"></div>
<div class="t s" style="left:535.00px;top:452.00px;font-family:'Liberation Serif', serif;font-size:18px;line-height:22px;color:#2e3436;">3</div>
<div style="left:553px;top:453px;width:16px;height:16px;border-radius:50%;border:4.5px solid #3584e4;background:#fff"></div>
<div class="t s" style="left:573.00px;top:452.00px;font-family:'Liberation Serif', serif;font-size:18px;line-height:22px;color:#2e3436;">2</div>
<div style="left:590px;top:453px;width:16px;height:16px;border-radius:50%;border:1px solid #b9b1aa;background:#fff"></div>
<div class="t s" style="left:609.00px;top:452.00px;font-family:'Liberation Serif', serif;font-size:18px;line-height:22px;color:#2e3436;">1</div>
<div style="left:628px;top:453px;width:16px;height:16px;border-radius:50%;border:1px solid #b9b1aa;background:#fff"></div>
<div class="t s" style="left:648.00px;top:452.00px;font-family:'Liberation Serif', serif;font-size:18px;line-height:22px;color:#2e3436;">0</div>
<svg style="left:513px;top:452px" width="29" height="19"><rect x="0.5" y="0.5" width="28" height="18" fill="none" stroke="#6a6a6a" stroke-width="1" stroke-dasharray="1 2" opacity="0.6"/></svg>
<div class="t s" style="left:347.30px;top:490.00px;font-family:'Liberation Serif', serif;font-size:18px;line-height:22px;color:#2e3436;letter-spacing:0.386px;">Dimension and Subset Selection</div>
<div style="left:348px;top:509px;width:655px;height:214px;border:1px solid #d0ccc6;border-top:none"></div>
<div style="left:1002px;top:501px;width:1px;height:8px;background:#d0ccc6"></div>
<div style="left:592px;top:501px;width:411px;height:1px;background:#d0ccc6"></div>
<div style="left:354px;top:518px;width:643px;height:199px;border:1px solid #d6d1cc"></div>
<div class="t s" style="left:598.40px;top:526.00px;font-family:'Liberation Serif', serif;font-size:18px;line-height:22px;color:#2e3436;letter-spacing:1.000px;">Start:</div>
<div class="t s" style="left:708.20px;top:526.00px;font-family:'Liberation Serif', serif;font-size:18px;line-height:22px;color:#2e3436;letter-spacing:0.767px;">End:</div>
<div class="t s" style="left:804.90px;top:526.00px;font-family:'Liberation Serif', serif;font-size:18px;line-height:22px;color:#2e3436;letter-spacing:0.900px;">Stride:</div>
<div class="t s" style="left:905.30px;top:526.00px;font-family:'Liberation Serif', serif;font-size:18px;line-height:22px;color:#2e3436;letter-spacing:-0.014px;">Max Size</div>
<div class="t s" style="left:399.00px;top:560.00px;font-family:'Liberation Serif', serif;font-size:18px;line-height:22px;color:#2e3436;letter-spacing:0.733px;">Height:</div>
<div style="left:466px;top:552px;width:101px;height:37px;border:1px solid #cdc7c2;border-radius:5px;background:linear-gradient(#f6f5f4,#edebe9);box-shadow:0 1px 0 rgba(0,0,0,0.04)"></div>
<svg style="left:545px;top:568.0px" width="10" height="6" viewBox="0 0 10 6"><path d="M0 0h10l-5 5.5z" fill="#2e3436"/></svg>
<div class="t s" style="left:476.20px;top:560.00px;font-family:'Liberation Serif', serif;font-size:18px;line-height:22px;color:#2e3436;letter-spacing:0.625px;">dim 0</div>
<div style="left:572px;top:555px;width:101px;height:30px;border:1px solid #cdc7c2;border-radius:5px;background:#ffffff"></div>
<div class="t s" style="left:580.90px;top:560.00px;font-family:'Liberation Serif', serif;font-size:18px;line-height:22px;color:#000000;">0</div>
<div style="left:678px;top:555px;width:101px;height:30px;border:1px solid #cdc7c2;border-radius:5px;background:#ffffff"></div>
<div class="t s" style="left:686.80px;top:560.00px;font-family:'Liberation Serif', serif;font-size:18px;line-height:22px;color:#000000;letter-spacing:0.200px;">47</div>
<div style="left:784px;top:555px;width:101px;height:30px;border:1px solid #cdc7c2;border-radius:5px;background:#ffffff"></div>
<div class="t s" style="left:791.20px;top:560.00px;font-family:'Liberation Serif', serif;font-size:18px;line-height:22px;color:#000000;">1</div>
<div class="t s" style="left:889.90px;top:560.00px;font-family:'Liberation Serif', serif;font-size:18px;line-height:22px;color:#2e3436;letter-spacing:-0.500px;">48</div>
<div class="t s" style="left:404.50px;top:602.00px;font-family:'Liberation Serif', serif;font-size:18px;line-height:22px;color:#2e3436;letter-spacing:0.780px;">Width:</div>
<div style="left:466px;top:594px;width:101px;height:37px;border:1px solid #d5d0cc;border-radius:5px;background:#faf9f8"></div>
<svg style="left:545px;top:610.0px" width="10" height="6" viewBox="0 0 10 6"><path d="M0 0h10l-5 5.5z" fill="#929595"/></svg>
<div class="t s" style="left:476.20px;top:602.00px;font-family:'Liberation Serif', serif;font-size:18px;line-height:22px;color:#929595;letter-spacing:0.625px;">dim 0</div>
<div style="left:572px;top:597px;width:101px;height:30px;border:1px solid #d5d0cc;border-radius:5px;background:#faf9f8"></div>
<div class="t s" style="left:580.90px;top:602.00px;font-family:'Liberation Serif', serif;font-size:18px;line-height:22px;color:#929595;">0</div>
<div style="left:678px;top:597px;width:101px;height:30px;border:1px solid #d5d0cc;border-radius:5px;background:#faf9f8"></div>
<div class="t s" style="left:685.80px;top:602.00px;font-family:'Liberation Serif', serif;font-size:18px;line-height:22px;color:#929595;">0</div>
<div style="left:784px;top:597px;width:101px;height:30px;border:1px solid #d5d0cc;border-radius:5px;background:#faf9f8"></div>
<div class="t s" style="left:791.20px;top:602.00px;font-family:'Liberation Serif', serif;font-size:18px;line-height:22px;color:#929595;">1</div>
<div class="t s" style="left:887.90px;top:602.00px;font-family:'Liberation Serif', serif;font-size:18px;line-height:22px;color:#929595;">1</div>
<div class="t s" style="left:404.40px;top:644.00px;font-family:'Liberation Serif', serif;font-size:18px;line-height:22px;color:#2e3436;letter-spacing:0.800px;">Depth:</div>
<div style="left:466px;top:636px;width:101px;height:37px;border:1px solid #d5d0cc;border-radius:5px;background:#faf9f8"></div>
<svg style="left:545px;top:652.0px" width="10" height="6" viewBox="0 0 10 6"><path d="M0 0h10l-5 5.5z" fill="#929595"/></svg>
<div class="t s" style="left:476.20px;top:644.00px;font-family:'Liberation Serif', serif;font-size:18px;line-height:22px;color:#929595;letter-spacing:0.625px;">dim 0</div>
<div style="left:572px;top:639px;width:101px;height:30px;border:1px solid #d5d0cc;border-radius:5px;background:#faf9f8"></div>
<div class="t s" style="left:580.90px;top:644.00px;font-family:'Liberation Serif', serif;font-size:18px;line-height:22px;color:#929595;">0</div>
<div style="left:678px;top:639px;width:101px;height:30px;border:1px solid #d5d0cc;border-radius:5px;background:#faf9f8"></div>
<div class="t s" style="left:685.80px;top:644.00px;font-family:'Liberation Serif', serif;font-size:18px;line-height:22px;color:#929595;">0</div>
<div style="left:784px;top:639px;width:101px;height:30px;border:1px solid #d5d0cc;border-radius:5px;background:#faf9f8"></div>
<div class="t s" style="left:791.20px;top:644.00px;font-family:'Liberation Serif', serif;font-size:18px;line-height:22px;color:#929595;">1</div>
<div class="t s" style="left:887.90px;top:644.00px;font-family:'Liberation Serif', serif;font-size:18px;line-height:22px;color:#929595;">1</div>
<div style="left:466px;top:678px;width:101px;height:34px;border:1px solid #d5d0cc;border-radius:5px;background:#faf9f8"></div>
<div class="t s" style="left:490.00px;top:684.00px;font-family:'Liberation Serif', serif;font-size:18px;line-height:22px;color:#929595;letter-spacing:0.117px;">Dims...</div>
<div style="left:784px;top:678px;width:101px;height:34px;border:1px solid #cdc7c2;border-radius:5px;background:linear-gradient(#f6f5f4,#edebe9);box-shadow:0 1px 1px rgba(0,0,0,0.07)"></div>
<div class="t s" style="left:813.60px;top:684.00px;font-family:'Liberation Serif', serif;font-size:18px;line-height:22px;color:#2e3436;letter-spacing:0.225px;">Reset</div>
<div style="left:608px;top:734px;width:65px;height:34px;border:1px solid #cdc7c2;border-radius:5px;background:linear-gradient(#f6f5f4,#edebe9);box-shadow:0 1px 1px rgba(0,0,0,0.07)"></div>
<div class="t s" style="left:628.30px;top:740.00px;font-family:'Liberation Serif', serif;font-size:18px;line-height:22px;color:#2e3436;letter-spacing:-1.700px;">OK</div>
<div style="left:678px;top:734px;width:77px;height:34px;border:1px solid #cdc7c2;border-radius:5px;background:linear-gradient(#f6f5f4,#edebe9);box-shadow:0 1px 1px rgba(0,0,0,0.07)"></div>
<div class="t s" style="left:690.70px;top:740.00px;font-family:'Liberation Serif', serif;font-size:18px;line-height:22px;color:#2e3436;letter-spacing:0.220px;">Cancel</div></body></html>
